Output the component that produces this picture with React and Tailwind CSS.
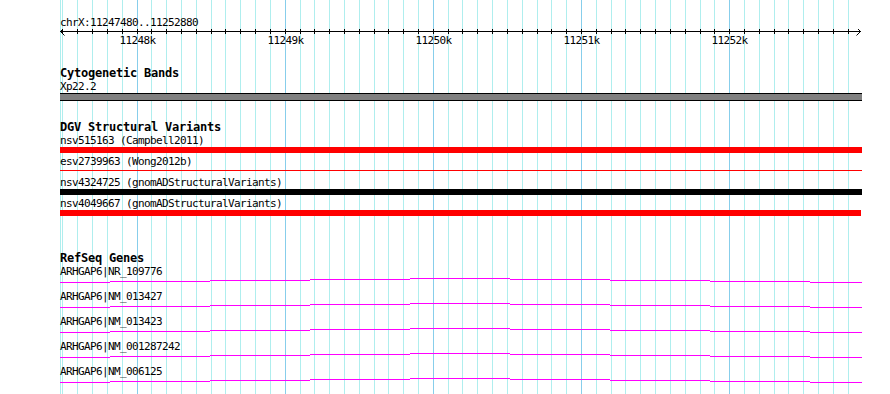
import React from 'react';

const START = 11247480;
const END = 11252880;
const px = (pos) => 60 + ((pos - START) * 800) / (END - START);

const gridLines = [];
for (let p = 11247500; p <= 11252800; p += 100) {
  gridLines.push({ x: Math.floor(px(p)) + 0.5, major: p % 1000 === 0, pos: p });
}

// textGap: space above the label, barGap: space between label and bar
const variants = [
  { label: 'nsv515163 (Campbell2011)', bar: 'w-[802px] h-[6px] bg-[#ff0000]', textGap: 'mt-0', barGap: 'mt-0' },
  { label: 'esv2739963 (Wong2012b)', bar: 'w-[802px] h-[1px] bg-[#ff0000]', textGap: 'mt-[2px]', barGap: 'mt-[2px]' },
  { label: 'nsv4324725 (gnomADStructuralVariants)', bar: 'w-[802px] h-[6px] bg-black', textGap: 'mt-[5px]', barGap: 'mt-0' },
  { label: 'nsv4049667 (gnomADStructuralVariants)', bar: 'w-[801px] h-[6px] bg-[#ff0000]', textGap: 'mt-[2px]', barGap: 'mt-0' },
];

const genes = ['ARHGAP6|NR_109776', 'ARHGAP6|NM_013427', 'ARHGAP6|NM_013423', 'ARHGAP6|NM_001287242', 'ARHGAP6|NM_006125'];
const steps = [60, 110, 210, 310, 410, 510, 610, 710, 810, 862];
const lift = [4, 3, 2, 1, 0, 1, 2, 3, 4];

function Grid() {
  return (
    <svg className="absolute inset-0" width="890" height="394">
      <line x1="60.5" y1="0" x2="60.5" y2="394" stroke="#afeeee" />
      {gridLines.map((g) => (
        <line key={g.pos} x1={g.x} y1="0" x2={g.x} y2="394" stroke={g.major ? '#87ceeb' : '#afeeee'} />
      ))}
    </svg>
  );
}

function Ruler() {
  return (
    <svg width="890" height="38" className="block">
      <rect x="60" y="2" width="801" height="1" fill="black" />
      <polyline points="64.5,-1.5 60.5,2.5 64.5,6.5" fill="none" stroke="black" />
      <polyline points="856.5,-1.5 860.5,2.5 856.5,6.5" fill="none" stroke="black" />
      {gridLines.map((g) => (
        <rect key={g.pos} x={g.x - 0.5} y="0" width="1" height="5" fill="black" />
      ))}
      {gridLines
        .filter((g) => g.major)
        .map((g) => (
          <text
            key={g.pos}
            x={g.x}
            y="15"
            textAnchor="middle"
            fontFamily="'DejaVu Sans Mono', 'Liberation Mono', monospace"
            fontSize="11"
            letterSpacing="-0.62"
            fill="black"
          >
            {g.pos / 1000}k
          </text>
        ))}
    </svg>
  );
}

function GeneLine() {
  return (
    <svg width="890" height="5" className="block">
      {lift.map((o, i) => (
        <rect key={i} x={steps[i]} y={o} width={steps[i + 1] - steps[i]} height="1" fill="#ff00ff" />
      ))}
    </svg>
  );
}

const small = "pl-[60px] h-[13px] text-[11px] leading-[13px] tracking-[-0.62px] whitespace-nowrap";
const title = "pl-[60px] h-[13px] text-[12px] leading-[13px] tracking-[-0.22px] font-bold whitespace-nowrap";

export default function App() {
  return (
    <div className="relative w-[890px] h-[394px] bg-white overflow-hidden text-black font-['DejaVu_Sans_Mono','Liberation_Mono',monospace]">
      <Grid />
      <div className="relative flex flex-col">
        <div className={`${small} mt-[16px]`}>chrX:11247480..11252880</div>
        <Ruler />

        <div className={title}>Cytogenetic Bands</div>
        <div className={small}>Xp22.2</div>
        <div className="ml-[60px] w-[802px] h-[8px] bg-[#808080] border-y border-black" />

        <div className={`${title} mt-[20px]`}>DGV Structural Variants</div>
        {variants.map((v) => (
          <div key={v.label} className={v.textGap}>
            <div className={small}>{v.label}</div>
            <div className={`ml-[60px] ${v.barGap} ${v.bar}`} />
          </div>
        ))}

        <div className={`${title} mt-[36px]`}>RefSeq Genes</div>
        {genes.map((g, i) => (
          <div key={g} className={i === 0 ? 'mt-0' : 'mt-[7px]'}>
            <div className={small}>{g}</div>
            <GeneLine />
          </div>
        ))}
      </div>
    </div>
  );
}
